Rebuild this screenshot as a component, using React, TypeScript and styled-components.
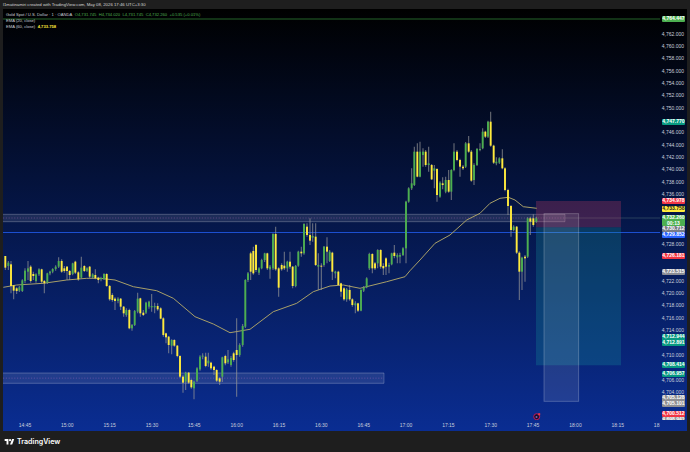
import React from 'react';
import styled, { createGlobalStyle } from 'styled-components';

const GlobalStyle = createGlobalStyle`
    html, body {
        margin: 0;
        padding: 0;
        background: #1e1e1e;
    }
`;

const GREEN = '#4caf50';
const YELLOW = '#ffeb3b';
const WICK = 'rgba(150, 150, 150, 0.7)';
const CHART_LEFT = 3;
const CHART_TOP = 9;
const PLOT_W = 657;
const PLOT_H = 411;

// candles traced from the reference at 3x: [x, bodyTop, bodyBottom, high, low, isUp]
type Row = [number, number, number, number, number, number];

const section = (x0: number, y0: number, rows: Row[]) =>
    rows.map(([x, top, bottom, high, low, up]) => ({
        x: x0 + x / 3,
        top: y0 + top / 3,
        bottom: y0 + bottom / 3,
        high: y0 + high / 3,
        low: y0 + low / 3,
        up: up === 1,
    }));

const candles = [
    ...section(0, 200, [
        [16, 168, 203, 168, 210, 0], [25, 188, 198, 183, 210, 1], [33, 193, 258, 183, 280, 0], [41, 256, 272, 255, 298, 0],
        [50, 265, 273, 262, 282, 0], [58, 262, 272, 258, 276, 1], [67, 241, 273, 238, 276, 1], [75, 212, 243, 205, 250, 1],
        [84, 205, 215, 183, 240, 1], [92, 200, 243, 196, 248, 0], [100, 222, 228, 215, 240, 0], [108, 223, 243, 220, 248, 1],
        [117, 208, 223, 205, 228, 1], [125, 208, 245, 206, 250, 0], [133, 243, 250, 240, 280, 0], [142, 220, 248, 218, 252, 1],
        [150, 215, 220, 212, 226, 1], [158, 207, 215, 205, 220, 1], [167, 200, 207, 196, 212, 1], [176, 183, 200, 172, 204, 1],
        [185, 183, 215, 178, 218, 0], [193, 205, 213, 198, 218, 0], [201, 200, 213, 198, 240, 0], [209, 213, 225, 210, 240, 0],
        [218, 190, 222, 188, 226, 1], [226, 185, 218, 182, 222, 0], [235, 217, 238, 214, 242, 0], [244, 203, 233, 170, 235, 1],
        [253, 198, 213, 196, 216, 0], [261, 205, 212, 202, 216, 1], [269, 200, 230, 198, 234, 0], [278, 223, 232, 220, 235, 1],
        [286, 225, 235, 208, 238, 0], [295, 233, 240, 230, 250, 0], [303, 234, 238, 230, 244, 1], [312, 222, 237, 220, 240, 1],
        [320, 222, 258, 220, 260, 0], [329, 258, 298, 255, 302, 0], [337, 285, 300, 280, 305, 0], [345, 296, 303, 292, 330, 0],
        [354, 296, 303, 292, 310, 1], [362, 296, 320, 294, 330, 0], [371, 320, 340, 318, 350, 0], [379, 330, 345, 325, 350, 1],
        [388, 330, 385, 326, 388, 0], [396, 375, 385, 372, 392, 1], [404, 333, 375, 330, 378, 1], [413, 296, 335, 278, 340, 1],
        [421, 295, 340, 293, 350, 0], [430, 338, 345, 330, 348, 0], [438, 308, 338, 305, 342, 1], [447, 305, 320, 302, 326, 1],
        [455, 318, 322, 282, 335, 1], [464, 318, 322, 308, 340, 1], [473, 318, 328, 310, 332, 0], [482, 325, 356, 322, 358, 0],
        [490, 355, 405, 352, 410, 0], [498, 400, 412, 398, 430, 0], [506, 410, 435, 408, 460, 0], [515, 420, 437, 418, 463, 1],
        [523, 420, 437, 418, 440, 0], [532, 437, 468, 435, 472, 0], [540, 468, 530, 466, 534, 0], [549, 530, 548, 526, 578, 0],
        [557, 518, 545, 515, 570, 1], [566, 518, 548, 516, 552, 0], [574, 540, 562, 536, 566, 0], [582, 545, 565, 542, 598, 1],
        [591, 505, 542, 502, 546, 1], [600, 470, 508, 466, 512, 1], [608, 467, 470, 460, 478, 1], [617, 470, 498, 458, 502, 0],
        [625, 482, 490, 458, 500, 1], [633, 488, 505, 485, 510, 0], [642, 500, 510, 497, 525, 0], [650, 510, 542, 508, 546, 0],
        [659, 535, 545, 532, 555, 0], [667, 472, 530, 470, 546, 1], [676, 468, 490, 464, 496, 0], [684, 478, 487, 450, 492, 1],
    ]),
    ...section(230, 200, [
        [3, 474, 495, 468, 500, 1], [11, 460, 480, 455, 485, 0], [20, 450, 465, 355, 590, 0], [29, 435, 465, 430, 470, 1],
        [38, 378, 435, 372, 440, 1], [46, 240, 380, 238, 384, 1], [54, 220, 240, 216, 246, 1], [62, 160, 215, 155, 240, 0],
        [70, 153, 220, 140, 224, 0], [78, 135, 210, 132, 216, 0], [87, 205, 218, 202, 225, 1], [95, 180, 205, 176, 208, 1],
        [104, 160, 180, 158, 186, 1], [112, 160, 205, 158, 210, 0], [120, 200, 208, 195, 236, 1], [129, 102, 205, 100, 210, 1],
        [137, 102, 208, 80, 212, 0], [146, 205, 263, 202, 290, 0], [155, 195, 208, 190, 212, 0], [163, 197, 205, 155, 210, 0],
        [172, 185, 205, 182, 215, 1], [180, 185, 200, 155, 206, 0], [188, 200, 258, 198, 265, 0], [197, 198, 258, 195, 262, 1],
        [205, 155, 197, 152, 200, 1], [214, 155, 160, 140, 170, 0], [222, 72, 160, 70, 164, 1], [231, 80, 105, 70, 110, 0],
        [240, 105, 122, 55, 135, 0], [248, 108, 113, 70, 125, 1], [257, 110, 195, 70, 198, 0], [265, 195, 200, 160, 270, 1],
        [274, 197, 200, 190, 270, 0], [282, 140, 195, 138, 200, 1], [291, 140, 155, 112, 190, 0], [299, 155, 183, 150, 186, 1],
        [307, 158, 215, 155, 240, 0], [316, 215, 220, 212, 235, 1], [325, 215, 255, 212, 258, 0], [333, 250, 275, 248, 290, 0],
        [342, 265, 298, 262, 302, 0], [350, 268, 298, 264, 305, 1], [359, 270, 298, 255, 302, 0], [367, 298, 315, 295, 320, 0],
        [376, 310, 316, 304, 340, 1], [384, 310, 332, 308, 336, 0], [393, 270, 332, 268, 334, 1], [401, 262, 272, 258, 276, 1],
        [410, 235, 262, 232, 265, 1], [418, 162, 205, 158, 210, 1], [427, 162, 205, 160, 220, 0], [435, 190, 205, 186, 210, 0],
        [443, 150, 190, 148, 205, 1], [452, 150, 200, 148, 206, 0], [460, 198, 205, 190, 225, 0], [468, 175, 200, 172, 225, 0],
        [477, 195, 200, 188, 220, 1], [485, 160, 193, 158, 196, 1], [493, 158, 168, 135, 175, 0], [502, 165, 172, 160, 190, 1],
        [510, 165, 170, 158, 190, 1], [519, 145, 165, 142, 168, 1],
    ]),
    ...section(400, 100, [
        [18, 305, 445, 302, 490, 1], [26, 265, 305, 262, 308, 1], [35, 250, 265, 205, 270, 1], [43, 155, 255, 140, 258, 1],
        [52, 155, 230, 130, 232, 0], [60, 155, 230, 125, 232, 1], [69, 155, 165, 145, 200, 1], [77, 155, 195, 150, 200, 0],
        [86, 190, 195, 140, 215, 1], [95, 195, 238, 192, 240, 0], [103, 205, 212, 195, 265, 1], [111, 207, 285, 205, 305, 0],
        [120, 248, 290, 244, 293, 1], [128, 250, 255, 232, 268, 0], [137, 240, 275, 230, 280, 1], [146, 240, 275, 210, 278, 0],
        [154, 210, 275, 208, 300, 1], [162, 155, 210, 130, 214, 1], [171, 155, 180, 150, 184, 0], [180, 180, 200, 176, 230, 0],
        [189, 200, 205, 195, 210, 0], [197, 130, 200, 126, 204, 1], [206, 130, 155, 108, 158, 0], [214, 155, 242, 150, 245, 0],
        [222, 195, 240, 190, 255, 1], [231, 147, 195, 144, 198, 1], [240, 147, 150, 130, 154, 1], [248, 95, 145, 85, 148, 1],
        [256, 95, 110, 92, 114, 0], [264, 65, 110, 62, 114, 1], [272, 65, 137, 35, 140, 0], [281, 137, 188, 134, 192, 0],
        [289, 185, 190, 172, 196, 1], [298, 175, 188, 172, 192, 1], [307, 175, 205, 148, 208, 0], [315, 205, 270, 202, 274, 0],
        [324, 270, 318, 266, 345, 0], [333, 318, 390, 315, 410, 0], [341, 380, 390, 376, 394, 1], [350, 380, 458, 378, 462, 0],
        [358, 458, 515, 454, 600, 0], [366, 473, 515, 470, 570, 1], [375, 470, 475, 465, 545, 0], [383, 355, 470, 352, 474, 1],
        [391, 355, 365, 350, 405, 0], [400, 355, 375, 343, 380, 0], [409, 355, 365, 350, 368, 1],
    ]),
];

const emaPoints = [
    [10 / 3, 287.3], [50 / 3, 285], [130 / 3, 283.3], [200 / 3, 280], [260 / 3, 278.3], [300 / 3, 278.3], [115, 280],
    [400 / 3, 286.7], [470 / 3, 290.7], [520 / 3, 298.3], [585 / 3, 316.7], [640 / 3, 324], [230, 332.7], [250, 329.3],
    [273.3, 311.7], [296.7, 303.3], [313.3, 291.7], [330, 286], [343.3, 285], [360, 288.3], [386.7, 281.7], [405, 276.7],
    [410, 270.7], [420, 260], [435, 243.3], [450, 235], [466.7, 220], [480, 213.3], [490, 203.3], [500, 198.3], [508.3, 197.3],
    [515, 200], [523.3, 206.7], [536.7, 208.3],
];

const priceToY = (price: number) => 33.5 + (4762 - price) * 6.18;
const timeTicks = [
    '14:45', '15:00', '15:15', '15:30', '15:45', '16:00', '16:15', '16:30',
    '16:45', '17:00', '17:15', '17:30', '17:45', '18:00', '18:15', '18:30',
];

type Tag = { lines: string[]; top: number; height: number; bg: string; color?: string };

const priceTags: Tag[] = [
    { lines: ['4,764.447'], top: 16, height: 6, bg: '#4caf50' },
    { lines: ['4,747.770'], top: 119, height: 6, bg: '#089981' },
    { lines: ['4,734.978'], top: 198.3, height: 5.8, bg: '#f23645' },
    { lines: ['4,733.758'], top: 206, height: 5.8, bg: '#ffeb3b', color: '#222' },
    { lines: ['4,732.260', '00:13'], top: 215, height: 11, bg: '#4caf50' },
    { lines: ['4,730.712'], top: 226, height: 5.7, bg: '#787b86' },
    { lines: ['4,729.852'], top: 231.7, height: 6, bg: '#2962ff' },
    { lines: ['4,726.181'], top: 252.7, height: 6, bg: '#f23645' },
    { lines: ['4,723.515'], top: 269, height: 6, bg: '#8a8c94' },
    { lines: ['4,712.944', '4,712.891'], top: 334, height: 12, bg: '#089981' },
    { lines: ['4,708.414'], top: 362.3, height: 5.8, bg: '#089981' },
    { lines: ['4,706.957'], top: 371.3, height: 6, bg: '#089981' },
    { lines: ['4,705.128', '4,705.101'], top: 395, height: 11.7, bg: '#8f8f92' },
    { lines: ['4,700.512'], top: 411, height: 6, bg: '#f23645' },
    { lines: ['4,698.941'], top: 417, height: 3, bg: '#9a9a9c' },
];

// labels under a tag are not drawn, same as the scale in the reference
const tickPrices = Array.from({ length: 30 }, (_, i) => 4762 - i * 2).filter((price) => {
    const y = priceToY(price);
    return !priceTags.some((tag) => y > tag.top - 2 && y < tag.top + tag.height + 2);
});

const Page = styled.div`
    width: 690px;
    height: 452px;
    background: #1e1e1e;
    display: flex;
    flex-direction: column;
    overflow: hidden;
    font-family: 'Liberation Sans', Arial, sans-serif;
`;

const Caption = styled.div`
    height: ${CHART_TOP}px;
    flex: none;
    padding-left: 3px;
    color: #d6d6d6;
    font-size: 4.3px;
    line-height: 9px;
    white-space: nowrap;
`;

const ChartPane = styled.div`
    position: relative;
    flex: none;
    width: 684px;
    height: 422px;
    margin-left: ${CHART_LEFT}px;
    display: flex;
    flex-direction: column;
    background: linear-gradient(180deg, #000000 0%, #0a2d92 100%);
`;

const PaneRow = styled.div`
    display: flex;
    flex: 1;
    min-height: 0;
`;

const Plot = styled.svg`
    display: block;
    flex: none;
    width: ${PLOT_W}px;
    height: ${PLOT_H}px;
`;

const PriceScale = styled.div`
    position: relative;
    flex: 1;
    overflow: hidden;
`;

const PriceTick = styled.span<{ $top: number }>`
    position: absolute;
    right: 3px;
    top: ${(p) => p.$top}px;
    transform: translateY(-50%);
    color: #c9cfdc;
    font-size: 5px;
    line-height: 6px;
`;

const PriceTag = styled.div<{ $top: number; $height: number; $bg: string; $color?: string }>`
    position: absolute;
    left: 1.7px;
    width: 23.4px;
    top: ${(p) => p.$top}px;
    height: ${(p) => p.$height}px;
    background: ${(p) => p.$bg};
    color: ${(p) => p.$color || '#ffffff'};
    border-radius: 1px;
    font-size: 5px;
    font-weight: 700;
    line-height: 5.9px;
    text-align: center;
    overflow: hidden;
`;

const TimeScale = styled.div`
    flex: none;
    width: ${PLOT_W}px;
    height: 11px;
    padding-left: 0.8px;
    box-sizing: border-box;
    display: flex;
    overflow: hidden;
`;

const TimeTick = styled.span`
    flex: none;
    width: 42.35px;
    text-align: center;
    color: #c9cfdc;
    font-size: 5px;
    line-height: 11px;
`;

const Legend = styled.div`
    position: absolute;
    left: 3px;
    top: 3.4px;
    color: #c9cdd6;
    font-size: 4.15px;
    line-height: 5.7px;
`;

const LegendRow = styled.div`
    display: flex;
    gap: 2.4px;
    white-space: nowrap;
`;

const GreenValue = styled.span`
    color: #4caf50;
`;

const YellowValue = styled.span`
    color: #ffeb3b;
    font-weight: 700;
`;

const Footer = styled.div`
    flex: 1;
    display: flex;
    align-items: center;
    gap: 2px;
    padding-left: 4px;
    color: #ffffff;
    font-family: Inter, 'Liberation Sans', sans-serif;
    font-size: 7.1px;
    font-weight: 600;
`;

const LogoMark = styled.svg`
    width: 11px;
    height: 7px;
    fill: #ffffff;
`;

const Candles = () => (
    <g>
        {candles.map((c, i) => (
            <g key={i}>
                <line x1={c.x} x2={c.x} y1={c.high} y2={c.low} stroke={WICK} strokeWidth={1.1} />
                <rect
                    x={c.x - 0.95}
                    y={c.top}
                    width={1.9}
                    height={Math.max(c.bottom - c.top, 0.8)}
                    fill={c.up ? GREEN : YELLOW}
                />
            </g>
        ))}
    </g>
);

const Zone = ({ x2, y1, y2 }: { x2: number; y1: number; y2: number }) => (
    <g>
        <rect x={CHART_LEFT} y={y1} width={x2 - CHART_LEFT} height={y2 - y1} fill="rgba(255,255,255,0.1)" />
        <line x1={CHART_LEFT} x2={x2} y1={y1} y2={y1} stroke="rgba(255,255,255,0.3)" strokeWidth={0.8} />
        <line x1={CHART_LEFT} x2={x2} y1={y2} y2={y2} stroke="rgba(255,255,255,0.3)" strokeWidth={0.8} />
        <line x1={x2} x2={x2} y1={y1} y2={y2} stroke="rgba(255,255,255,0.25)" strokeWidth={0.8} />
        <line
            x1={CHART_LEFT}
            x2={x2}
            y1={(y1 + y2) / 2}
            y2={(y1 + y2) / 2}
            stroke="rgba(200,120,200,0.4)"
            strokeWidth={0.8}
            strokeDasharray="1.2 1.6"
        />
    </g>
);

const ChartDrawing = () => (
    <Plot viewBox={`${CHART_LEFT} ${CHART_TOP} ${PLOT_W} ${PLOT_H}`}>
        <line x1={CHART_LEFT} x2={660} y1={19} y2={19} stroke="#2e7d32" strokeWidth={0.8} />
        <Zone x2={565} y1={214.3} y2={221.7} />
        <Zone x2={384} y1={373} y2={383.3} />
        <line x1={CHART_LEFT} x2={660} y1={232.5} y2={232.5} stroke="#1c4fd0" strokeWidth={1.2} />
        <line x1={565} x2={660} y1={218} y2={218} stroke="rgba(120,160,140,0.5)" strokeWidth={0.6} />
        <rect x={536} y={201} width={85} height={26.3} fill="rgba(190,60,100,0.3)" />
        <rect x={536} y={227.3} width={85} height={138} fill="rgba(20,140,150,0.3)" />
        <rect
            x={544}
            y={213.7}
            width={34.7}
            height={187.6}
            fill="rgba(255,255,255,0.1)"
            stroke="rgba(255,255,255,0.28)"
            strokeWidth={0.8}
        />
        <polyline
            points={emaPoints.map(([x, y]) => `${x},${y}`).join(' ')}
            fill="none"
            stroke="#a89f68"
            strokeWidth={1}
        />
        <Candles />
        <circle cx={536.7} cy={416.7} r={3} fill="#14102a" stroke="#c2185b" strokeWidth={1} />
        <circle cx={536.5} cy={417} r={1} fill="#7a5cc0" />
        <rect x={538.2} y={413.2} width={2} height={2} fill="#f23645" />
    </Plot>
);

const App = () => (
    <Page>
        <GlobalStyle />
        <Caption>l1matinamiri created with TradingView.com, May 08, 2026 17:46 UTC+3:30</Caption>
        <ChartPane>
            <PaneRow>
                <ChartDrawing />
                <PriceScale>
                    {tickPrices.map((price) => (
                        <PriceTick key={price} $top={priceToY(price) - CHART_TOP}>
                            {price.toLocaleString('en-US')}.000
                        </PriceTick>
                    ))}
                    {priceTags.map((tag) => (
                        <PriceTag
                            key={tag.lines[0]}
                            $top={tag.top - CHART_TOP}
                            $height={tag.height}
                            $bg={tag.bg}
                            $color={tag.color}
                        >
                            {tag.lines.map((line) => (
                                <div key={line}>{line}</div>
                            ))}
                        </PriceTag>
                    ))}
                </PriceScale>
            </PaneRow>
            <TimeScale>
                {timeTicks.map((t) => (
                    <TimeTick key={t}>{t}</TimeTick>
                ))}
            </TimeScale>
            <Legend>
                <LegendRow>
                    <span>Gold Spot / U.S. Dollar · 1 · OANDA</span>
                    <GreenValue>O4,731.745</GreenValue>
                    <GreenValue>H4,734.020</GreenValue>
                    <GreenValue>L4,731.745</GreenValue>
                    <GreenValue>C4,732.260</GreenValue>
                    <GreenValue>+0.535 (+0.01%)</GreenValue>
                </LegendRow>
                <LegendRow>EMA (20, close)</LegendRow>
                <LegendRow>
                    <span>EMA (60, close)</span>
                    <YellowValue>4,733.758</YellowValue>
                </LegendRow>
            </Legend>
        </ChartPane>
        <Footer>
            <LogoMark viewBox="0 0 36 26">
                <path d="M14 24H7V11H0V4h14v20z" />
                <path d="M28 24h-8l7.5-20h8L28 24z" />
                <circle cx="20" cy="8" r="4" />
            </LogoMark>
            <span>TradingView</span>
        </Footer>
    </Page>
);

export default App;
